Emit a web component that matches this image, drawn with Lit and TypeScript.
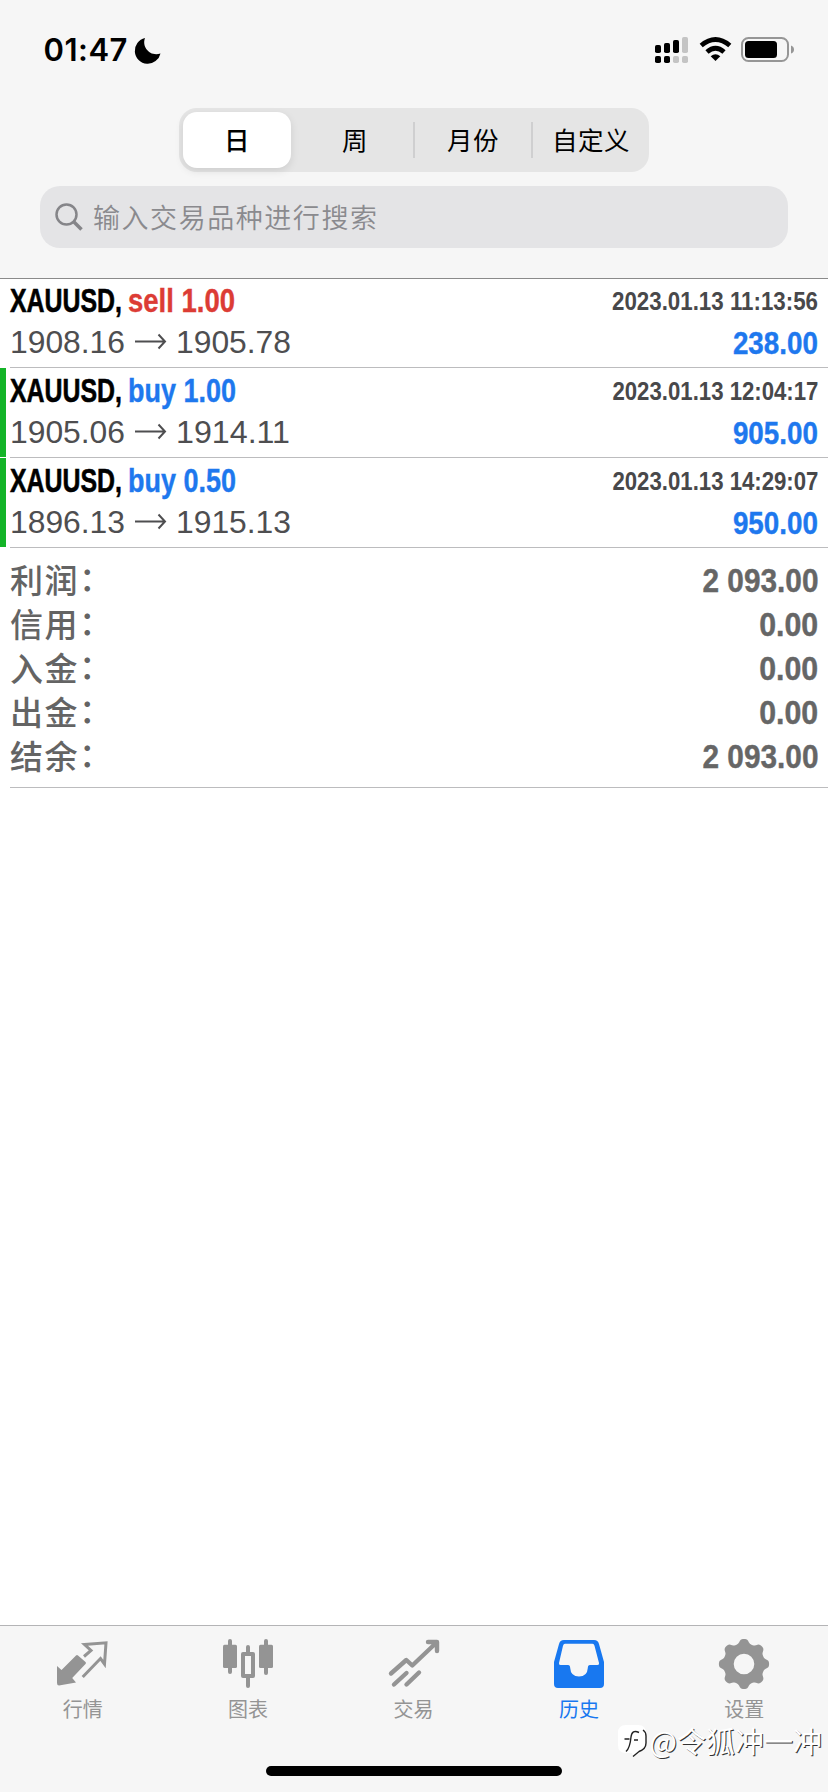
import { LitElement, html, svg, css } from "lit";
import { customElement, property } from "lit/decorators.js";

type Tone = "sell" | "buy";
interface Deal { tone: Tone; label: string; labelWidth: number; open: string; close: string; closeWidth: number; time: string; profit: string; marked: boolean; }

const deals: Deal[] = [
  { tone: "sell", label: "sell 1.00", labelWidth: 107, open: "1908.16", close: "1905.78", closeWidth: 115, time: "2023.01.13 11:13:56", profit: "238.00", marked: false },
  { tone: "buy", label: "buy 1.00", labelWidth: 108, open: "1905.06", close: "1914.11", closeWidth: 114, time: "2023.01.13 12:04:17", profit: "905.00", marked: true },
  { tone: "buy", label: "buy 0.50", labelWidth: 108, open: "1896.13", close: "1915.13", closeWidth: 115, time: "2023.01.13 14:29:07", profit: "950.00", marked: true },
];

const totals = [
  { name: "利润", value: "2 093.00", width: 116 },
  { name: "信用", value: "0.00", width: 59 },
  { name: "入金", value: "0.00", width: 59 },
  { name: "出金", value: "0.00", width: 59 },
  { name: "结余", value: "2 093.00", width: 116 },
];

// One line of text squeezed horizontally to a given width, for condensed lettering.
@customElement("fit-text")
export class FitText extends LitElement {
  @property() text = "";
  @property({ type: Number }) width = 0;
  @property({ type: Boolean, reflect: true }) end = false;

  static styles = css`
    :host { display: flex; flex: none; }
    :host([end]) { justify-content: flex-end; }
    span { flex: none; white-space: pre; transform-origin: 0 50%; }
    :host([end]) span { transform-origin: 100% 50%; }
  `;

  updated() {
    const line = this.renderRoot.querySelector("span") as HTMLElement;
    line.style.transform = "none";
    const natural = line.getBoundingClientRect().width;
    this.style.width = `${this.width}px`;
    line.style.transform = `scaleX(${this.width / natural})`;
  }

  render() { return html`<span>${this.text}</span>`; }
}

const fit = (text: string, width: number, cls: string, end = false) =>
  html`<fit-text class=${cls} .text=${text} .width=${width} ?end=${end}></fit-text>`;

const gearPath = (() => {
  const pts: string[] = [];
  for (let i = 0; i <= 144; i++) {
    const a = (i / 144) * Math.PI * 2;
    const r = 22.9 + 2.2 * Math.tanh(1.5 * Math.cos(8 * a)) / Math.tanh(1.5);
    pts.push(`${(26 + r * Math.cos(a)).toFixed(2)} ${(26 + r * Math.sin(a)).toFixed(2)}`);
  }
  return "M" + pts.join("L") + "Z M36.3 26a10.3 10.3 0 1 0-20.6 0a10.3 10.3 0 1 0 20.6 0Z";
})();

const tabs = [
  { name: "行情", icon: svg`
    <path fill="currentColor" d="M0 28L4.500 32 19 17.500Q20 16.500 21 17.500L28.500 24Q29.500 25 28.500 26L15.200 40 19 44.500 2 47.500Q0 47.500 0 45z"/>
    <path fill="none" stroke="currentColor" stroke-width="3" d="M27 18.500L34 12.500 27.500 6.500 49 4.800 47.500 26 43.500 20.500 25.700 39"/>` },
  { name: "图表", icon: svg`
    <g fill="currentColor"><rect x="1" y="6.700" width="14" height="23.300" rx="1.500"/><rect x="6" y="1" width="4" height="35" rx="2"/>
    <rect x="37" y="6.700" width="14" height="23.300" rx="1.500"/><rect x="42" y="1" width="4" height="36" rx="2"/>
    <rect x="24" y="7" width="4" height="9" rx="2"/><rect x="24" y="38" width="4" height="12" rx="2"/></g>
    <rect x="21" y="16" width="10" height="22" fill="none" stroke="currentColor" stroke-width="4" stroke-linejoin="round"/>` },
  { name: "交易", icon: svg`
    <path fill="none" stroke="currentColor" stroke-width="4.400" stroke-linecap="round" stroke-linejoin="round" d="M3 35.500L18.300 22l6 5.500L48 5M40 4h9v9M6 46.500l12.500-11.500M18.500 46.500l12.500-12"/>` },
  { name: "历史", icon: svg`
    <path fill="currentColor" fill-rule="evenodd" d="M11 2h30q4 0 5 4l5 18v22q0 4-4 4H5q-4 0-4-4V24L6 6q1-4 5-4zM12 5.700q-1.500 0-2 2L6 25q-.5 2 1.500 2H15q2.200 0 2.200 3 .5 8.500 8.800 8.500t8.800-8.500q0-3 2.200-3h7.500q2 0 1.500-2L41.500 7.700q-.5-2-2-2z"/>` },
  { name: "设置", icon: svg`<path fill="currentColor" fill-rule="evenodd" d=${gearPath} />` },
];

@customElement("app-root")
export class AppRoot extends LitElement {
  static styles = css`
    :host { display: flex; flex-direction: column; position: relative; width: 828px; height: 1792px; overflow: hidden; background: #fff;
      font-family: "Liberation Sans", "Noto Sans CJK SC", sans-serif; color: #000; }
    svg { display: block; flex: none; overflow: visible; }
    .top { position: relative; z-index: 1; box-sizing: border-box; height: 279px; background: #f6f6f6; border-bottom: 1px solid #8a8a8a; display: flex; flex-direction: column; }
    .status { height: 108px; box-sizing: border-box; padding: 31px 34px 0 43.500px; display: flex; align-items: flex-start; }
    .clock { width: 84px; font: 600 31px/37px "Inter", sans-serif; letter-spacing: .5px; white-space: nowrap; }
    .moon { margin: 7px 0 0 8.500px; }
    .signals { margin-left: auto; margin-top: 5px; }
    .segments { align-self: center; box-sizing: border-box; width: 470px; height: 64px; border-radius: 18px; background: #e5e5e5; padding: 4px 0 4px 4px; display: flex; }
    .segment { flex: 1; display: flex; align-items: center; justify-content: center; font: 400 25.500px/54px "Noto Sans CJK SC", sans-serif; letter-spacing: .5px; padding-bottom: 2px; }
    .segment.on { background: #fff; border-radius: 14px; flex: 0 0 108px; font-weight: 500; box-shadow: 0 3px 8px rgba(0,0,0,.1); margin-right: 6px; }
    .segment.line { border-left: 2px solid #cfcfd0; margin: 10px 0; padding-bottom: 2px; }
    .search { margin: 14px 40px 0; height: 62px; border-radius: 20px; background: #e4e4e6; display: flex; align-items: center; color: #8a8a8e;
      font: 350 27px/60px "Noto Sans CJK SC", sans-serif; letter-spacing: 1.550px; }
    .search svg { margin: 0 10px 0 15px; }
    main { margin-top: -1px; }
    .deal { position: relative; box-sizing: border-box; height: 90px; padding: 0 10px; display: flex; justify-content: space-between; }
    .deal::after, .totals::after { content: ""; position: absolute; left: 10px; right: 0; bottom: 0; height: 1px; background: #bcbcbe; }
    .deal.marked::before { content: ""; position: absolute; left: 0; top: 0; bottom: 1px; width: 6px; background: #14b428; }
    .left, .right { display: flex; flex-direction: column; }
    .right { align-items: flex-end; }
    .pair { display: flex; }
    fit-text { font: 700 33px/45px "Liberation Sans", sans-serif; }
    .symbol { -webkit-text-stroke: .6px #000; margin-right: 6px; }
    .sell { color: #dc3c35; -webkit-text-stroke: .4px #dc3c35; }
    .buy { color: #1e78ee; -webkit-text-stroke: .4px #1e78ee; }
    .price { font-weight: 400; font-size: 32px; line-height: 38px; color: #4e4e50; }
    .time { font-size: 26px; line-height: 46px; color: #48484a; }
    .profit { font-size: 32px; line-height: 38px; color: #1e78ee; -webkit-text-stroke: .4px #1e78ee; }
    .total { color: #666; -webkit-text-stroke: .4px #666; }
    .totals { position: relative; box-sizing: border-box; height: 240px; padding: 10px 10px 0; }
    .sum { display: flex; justify-content: space-between; height: 44px; }
    .name { color: #646464; font: 500 33px/42px "Noto Sans CJK SC", sans-serif; letter-spacing: 1.500px; display: flex; }
    .colon { font-family: "Noto Sans CJK TC", sans-serif; font-feature-settings: "halt"; }
    .bottom { margin-top: auto; box-sizing: border-box; height: 167px; border-top: 1px solid #b4b4b6; background: #f6f6f6; position: relative; }
    .tabs { display: flex; padding: 12px 1px 0 0; }
    .tab { flex: 1; display: flex; flex-direction: column; align-items: center; color: #949494; font: 400 20px/28px "Noto Sans CJK SC", sans-serif; }
    .tab span { margin-top: 5px; }
    .tab.on { color: #1878f0; }
    .home { position: absolute; left: 266px; bottom: 16px; width: 296px; height: 10px; border-radius: 5px; background: #000; }
    .mark { position: absolute; right: 6px; top: 94px; display: flex; align-items: center; gap: 3px; color: #fff; font: 400 29px/40px "Noto Sans CJK SC", sans-serif; text-shadow: 1px 1px 0 #333; }
  `;

  render() {
    return html`
      <header class="top">
        <div class="status">
          <span class="clock">01:47</span>
          <svg class="moon" width="25" height="25"><path d="M9 0C5.500 9 14 19 24.500 15.500A13 13 0 1 1 9 0z"/></svg>
          <svg class="signals" width="140" height="28">
            <rect x="1" y="9" width="6" height="8" rx="1.800"/><rect x="10" y="7" width="6" height="10" rx="1.800"/><rect x="19" y="4" width="6" height="13" rx="1.800"/>
            <rect x="1" y="20" width="6" height="7" rx="1.800"/><rect x="10" y="20" width="6" height="7" rx="1.800"/>
            <g fill="#c4c4c4"><rect x="28" y="1" width="6" height="16" rx="1.800"/><rect x="19" y="20" width="6" height="7" rx="1.800"/><rect x="28" y="20" width="6" height="7" rx="1.800"/></g>
            <g fill="none" stroke="#000" stroke-width="4.800"><path d="M47.200 9.500Q61.500-2.500 75.800 9.500"/><path d="M53 16Q61.500 8.500 70 16"/></g>
            <path d="M61.500 25L56.700 20.200Q61.500 16.200 66.300 20.200z"/>
            <rect x="88" y="2" width="46" height="23" rx="6.500" fill="none" stroke="#969696" stroke-width="2"/>
            <rect x="91" y="5" width="32" height="17" rx="3.500"/>
            <path fill="#969696" d="M137 9.500q3 1 3 4t-3 4z"/>
          </svg>
        </div>
        <nav class="segments">
          <div class="segment on">日</div><div class="segment">周</div><div class="segment line">月份</div><div class="segment line">自定义</div>
        </nav>
        <div class="search">
          <svg width="28" height="28" fill="none" stroke="#858589" stroke-width="2.500"><circle cx="11.500" cy="11.500" r="10"/><path stroke-width="3.500" d="M18.500 18.500l8 8"/></svg>
          <span>输入交易品种进行搜索</span>
        </div>
      </header>
      <main>
        ${deals.map((d) => html`<section class="deal ${d.marked ? "marked" : ""}">
          <div class="left">
            <div class="pair">${fit("XAUUSD,", 112, "symbol")}${fit(d.label, d.labelWidth, d.tone)}</div>
            <div class="pair">${fit(d.open, 115, "price")}
              <svg width="51" height="38" fill="none" stroke="#4e4e50" stroke-width="2"><path d="M10 18.500h30M33.500 11.500L40 18.500 33.500 25.500"/></svg>
              ${fit(d.close, d.closeWidth, "price")}</div>
          </div>
          <div class="right">${fit(d.time, 206, "time", true)}${fit(d.profit, 85, "profit", true)}</div>
        </section>`)}
        <section class="totals">${totals.map((t) => html`<div class="sum"><div class="name"><span>${t.name}</span><span class="colon">：</span></div>${fit(t.value, t.width, "total", true)}</div>`)}</section>
      </main>
      <footer class="bottom">
        <div class="tabs">${tabs.map((t) => html`<div class="tab ${t.name === "历史" ? "on" : ""}"><svg width="52" height="52">${t.icon}</svg><span>${t.name}</span></div>`)}</div>
        <div class="home"></div>
        <div class="mark">
          <svg width="29" height="32"><path fill="#fff" d="M8 1h12q8 0 8 8v11q0 6-7 8l-6 4-1-3H8q-8 0-8-8V9q0-8 8-8z"/>
            <path fill="none" stroke="#222" stroke-width="1.400" d="M21 8.500Q14 5 13 13 12 24 8 27.500M6.500 15h5M16 16h4M25 6q3 2 3 6v7q0 6-7 8.500l-6 5"/></svg>
          <span>@令狐冲一冲</span>
        </div>
      </footer>`;
  }
}
